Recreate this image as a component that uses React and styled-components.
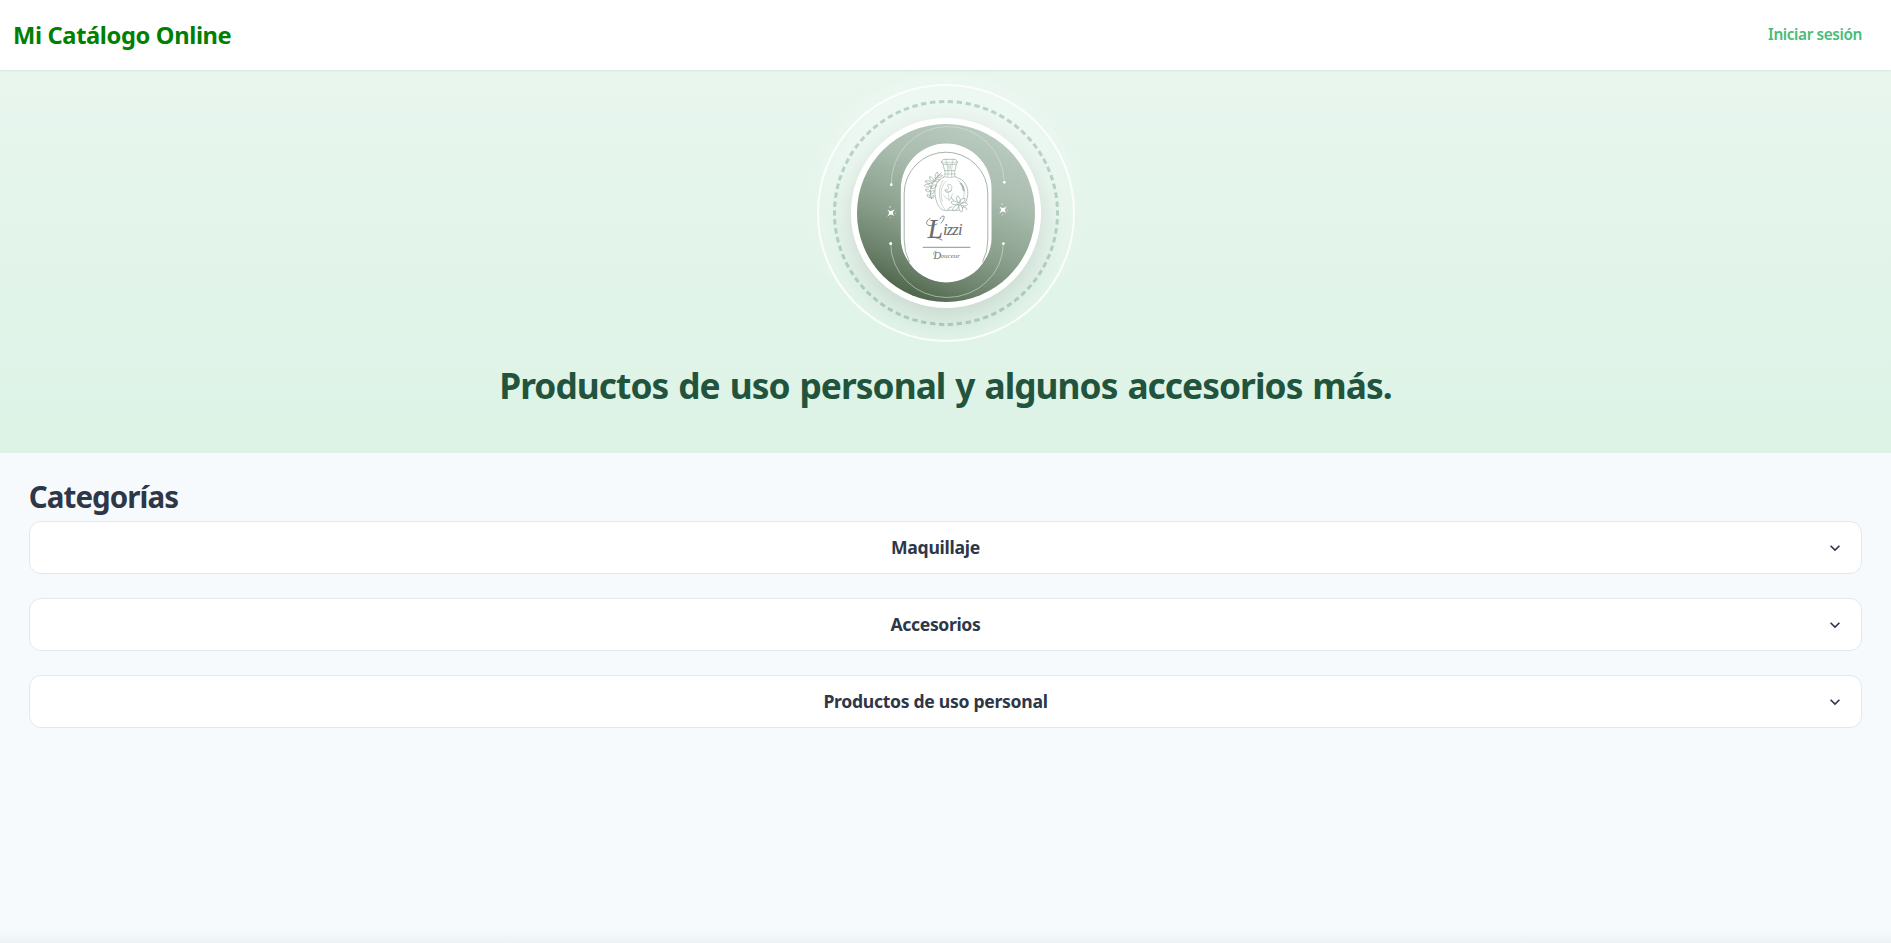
import React from "react";
import styled, { createGlobalStyle } from "styled-components";

const GlobalStyle = createGlobalStyle`
  *, *::before, *::after { box-sizing: border-box; }
  html, body { margin: 0; padding: 0; }
  body {
    background: #f6fafd;
    color: #2d3748;
    font-family: "Noto Sans", "Open Sans", sans-serif;
    overflow: hidden;
  }
  h1, h2, p { margin: 0; }
`;

const Page = styled.div`
  display: flex;
  flex-direction: column;
  height: 943px;
`;

const Navbar = styled.header`
  display: flex;
  align-items: center;
  justify-content: space-between;
  flex: none;
  height: 70px;
  padding: 0 29px 0 13px;
  background: #fff;
  box-shadow: 0 1px 2px rgba(0, 0, 0, 0.07);
  position: relative;
  z-index: 1;
`;

const Brand = styled.p`
  color: #008000;
  font-size: 23.7px;
  line-height: 36px;
  font-weight: 700;
  letter-spacing: -0.37px;
`;

const LoginLink = styled.a`
  color: #48bb78;
  font-size: 15.4px;
  line-height: 24px;
  font-weight: 600;
  letter-spacing: -0.4px;
  text-decoration: none;
`;

const Hero = styled.section`
  display: flex;
  flex-direction: column;
  align-items: center;
  flex: none;
  height: 383px;
  padding-top: 14px;
  background: linear-gradient(180deg, #e8f6ee 0%, #ddf3e6 100%);
`;

const OuterRing = styled.div`
  display: grid;
  place-items: center;
  width: 258px;
  height: 258px;
  border: 2px solid rgba(255, 255, 255, 0.85);
  border-radius: 50%;
  position: relative;

  &::before {
    content: "";
    position: absolute;
    inset: -22px;
    border-radius: 50%;
    background: radial-gradient(closest-side, rgba(255, 255, 255, 0.5) 0%, rgba(255, 255, 255, 0.34) 78%, rgba(255, 255, 255, 0) 100%);
    mask-image: linear-gradient(180deg, #000 0%, rgba(0, 0, 0, 0.15) 75%);
  }
`;

const DashedRing = styled.div`
  display: grid;
  place-items: center;
  width: 226px;
  height: 226px;
  border-radius: 50%;
  position: relative;
`;

const DashedCircle = styled.svg`
  position: absolute;
  inset: 0;
`;

const Badge = styled.div`
  width: 190px;
  height: 190px;
  border: 6px solid #fff;
  border-radius: 50%;
  overflow: hidden;
  box-shadow: 0 10px 30px rgba(0, 0, 0, 0.12);
  position: relative;

  svg { display: block; }
`;

const HeroTitle = styled.h1`
  margin-top: 19px;
  color: #22543d;
  font-size: 35.3px;
  line-height: 48px;
  font-weight: 700;
  letter-spacing: -0.95px;
  word-spacing: 1.7px;
  white-space: nowrap;
`;

const Content = styled.main`
  display: flex;
  flex-direction: column;
  flex: 1;
  padding: 24px 28.8px 0;
`;

const SectionTitle = styled.h2`
  font-size: 29.5px;
  line-height: 39px;
  height: 44px;
  font-weight: 700;
  letter-spacing: -0.93px;
`;

const CategoryList = styled.div`
  display: flex;
  flex-direction: column;
  gap: 24px;
`;

const CategoryButton = styled.button`
  display: flex;
  align-items: center;
  height: 53px;
  padding: 0 16px;
  border: 1px solid #e2e8f0;
  border-radius: 12px;
  background: #fff;
  color: #2d3748;
  font-family: inherit;
`;

const CategoryName = styled.span`
  flex: 1;
  text-align: center;
  font-size: 17.6px;
  line-height: 26px;
  font-weight: 700;
  padding-bottom: 2px;
  letter-spacing: ${(p) => p.$tracking}px;
`;

const FooterShadow = styled.footer`
  flex: none;
  height: 14px;
  background: linear-gradient(180deg, rgba(34, 104, 71, 0), rgba(34, 104, 71, 0.045));
`;

function Sparkle({ x, y }) {
  return (
    <g transform={`translate(${x} ${y})`} fill="#fff" stroke="none">
      <path d="M-3.6 -3 Q-.6 -1.5 .2 -1.7 Q1.8 -2.2 4 -3.6 Q1.8 -1 1.8 .2 Q2 1.6 3.4 3.4 Q1 1.7 -.2 1.8 Q-1.6 2 -3.8 4 Q-1.9 1.2 -1.9 0 Q-2 -1.2 -3.6 -3Z" />
      <circle cx="-1" cy="-5.8" r="0.8" opacity="0.65" />
      <circle cx="-0.5" cy="4.9" r="0.7" opacity="0.5" />
      <circle cx="4.4" cy="0.6" r="0.6" opacity="0.5" />
    </g>
  );
}

function LogoArt() {
  return (
    <svg width="178" height="178" viewBox="0 0 178 178">
      <defs>
        <linearGradient id="sage" x1="0.69" y1="0.02" x2="0.27" y2="0.98">
          <stop offset="0" stopColor="#bacbbf" />
          <stop offset="0.3" stopColor="#a9bcae" />
          <stop offset="0.6" stopColor="#8aa08c" />
          <stop offset="0.82" stopColor="#6c826b" />
          <stop offset="1" stopColor="#4b6145" />
        </linearGradient>
      </defs>
      <rect width="178" height="178" fill="url(#sage)" />
      <g fill="none" stroke="#dbe7dd" strokeWidth="0.7" opacity="0.8">
        <path d="M34.3 60.5 A56.5 57 0 0 1 147.3 58.5" />
        <path d="M33.7 119.5 A56.3 54 0 0 0 146.3 119.5" />
      </g>
      <g fill="#fff">
        <circle cx="34.3" cy="60.7" r="1.4" />
        <circle cx="147.3" cy="58.3" r="1.4" />
        <circle cx="33.7" cy="119.4" r="1.5" />
        <circle cx="146.4" cy="119.6" r="1.4" />
      </g>
      <Sparkle x={34} y={88.7} />
      <Sparkle x={146} y={85.8} />

      <rect x="43.8" y="20.4" width="90.9" height="138.2" rx="45.4" fill="#3f5a45" opacity="0.2" />
      <path
        d="M43.8 65 A45.4 45.4 0 0 1 134.6 65 V114 Q134.6 125 128.5 135 A44.8 44.8 0 0 1 49.8 135 Q43.8 125 43.8 114Z"
        fill="#fff"
      />
      <path
        d="M52.5 138 Q47.2 128 47.2 116 V69.5 A41.8 41.3 0 0 1 130.8 69.5 V116 Q130.8 128 125.5 138"
        fill="none"
        stroke="#8ba192"
        strokeWidth="0.8"
      />

      <g
        transform="translate(23 6) scale(0.3333)"
        fill="none"
        stroke="#96aa9d"
        strokeWidth="2.1"
        strokeLinecap="round"
        strokeLinejoin="round"
      >
        <path d="M191 88 H227 L233 97 L226 103 H191 L184 97Z" />
        <path d="M184 97 H233 M197 88 L201 103 M220 88 L216 103" strokeWidth="1.4" />
        <path d="M189 103 L194 122 H225 L229 103" />
        <path d="M202 105 V117 H216 V105 M206 114 V107 L211 113 V107" strokeWidth="1.4" />
        <path d="M195 122 V139 M224 122 V139 M204 122 V140 M215 122 V140 M193 132 H226 M191 140 Q209 146 228 140" strokeWidth="1.6" />
        <path d="M191 142 C166 151 160 179 168 209 Q175 235 190 241 H238 Q255 231 262 203 C269 170 252 146 228 142" />
        <path d="M188 153 C173 174 175 216 194 238 M233 150 C253 162 257 195 248 214" strokeWidth="1.4" />
        <path d="M199 153 C184 164 179 190 187 214" strokeWidth="1.4" />
        <path d="M240 159 Q249 168 250 181 M244 160 Q253 169 253 183" strokeWidth="2.8" />
        <path d="M202 166 Q214 158 216 172 Q216 185 205 188 Q193 187 196 178 Q205 182 207 174Z M196 181 Q207 190 215 181" strokeWidth="1.7" />
        <path d="M205 191 L208 212 M190 194 Q197 208 206 209 M218 191 Q214 204 209 211" strokeWidth="1.2" />
        <path d="M154 206 Q145 177 162 154 Q171 139 184 128" />
        <path d="M162 154 Q147 153 149 140 Q160 141 162 154 M158 159 Q142 165 135 153 Q145 148 158 159 M166 147 Q163 132 172 126 Q178 138 166 147" />
        <path d="M172 141 Q182 145 187 136 Q178 131 172 141 M164 153 Q175 160 179 148 Q171 144 164 153 M154 169 Q140 175 133 167 Q140 157 154 169" />
        <path d="M153 175 Q164 179 170 166 Q159 161 153 175 M151 184 Q139 190 136 178 Q145 174 151 184 M151 193 Q162 193 164 182 Q152 180 151 193 M152 202 Q141 205 141 194 Q149 191 152 202 M154 205 Q164 206 162 196 Q156 195 154 205" />
        <g fill="#fff">
          <path d="M238 222 Q224 207 233 198 Q246 206 238 222 Q241 204 255 205 Q256 218 238 222 Q258 214 263 223 Q256 234 238 222 Q254 236 245 246 Q233 240 238 222 Q231 246 218 241 Q218 228 238 222 Q215 228 213 216 Q223 208 238 222Z" />
          <path d="M233 220 L238 226 L244 219 M238 213 V224" strokeWidth="1.4" />
        </g>
        <path d="M216 230 Q205 231 203 241 M221 211 Q214 208 214 201 M251 231 Q260 231 261 239" />
      </g>

      <g fill="#6a6d6d" fontFamily='"Liberation Serif", serif' fontStyle="italic">
        <text x="70.5" y="113.5" fontSize="28">L</text>
        <text x="86" y="110.5" fontSize="16.5" textLength="19.5">izzi</text>
        <text x="76.5" y="135" fontSize="10.5">D</text>
        <text x="83.5" y="133.5" fontSize="7" textLength="19.5">ouceur</text>
      </g>
      <g fill="none" stroke="#6a6d6d" strokeWidth="0.8" strokeLinecap="round">
        <path d="M80 100 C70 105 66 98 73 94.5 M83 95 C87 88 89.5 94 84 99 M71.5 113.5 Q77 112 85 116" />
        <path d="M66.2 123.3 H113" strokeWidth="0.75" />
        <path d="M77 131 Q75 128 79 127" strokeWidth="0.5" />
      </g>
    </svg>
  );
}

function ChevronDown() {
  return (
    <svg width="20" height="20" viewBox="0 0 24 24" fill="currentColor">
      <path d="M16.59 8.59L12 13.17 7.41 8.59 6 10l6 6 6-6z" />
    </svg>
  );
}

const categories = [
  { name: "Maquillaje", tracking: -0.25 },
  { name: "Accesorios", tracking: -0.38 },
  { name: "Productos de uso personal", tracking: -0.3 },
];

export default function App() {
  return (
    <Page>
      <GlobalStyle />
      <Navbar>
        <Brand>Mi Catálogo Online</Brand>
        <LoginLink>Iniciar sesión</LoginLink>
      </Navbar>
      <Hero>
        <OuterRing>
          <DashedRing>
            <DashedCircle width="226" height="226" viewBox="0 0 226 226">
              <circle
                cx="113"
                cy="113"
                r="111.5"
                fill="none"
                stroke="#22674e"
                strokeOpacity="0.25"
                strokeWidth="3"
                pathLength="780"
                strokeDasharray="6 4"
                strokeDashoffset="3"
              />
            </DashedCircle>
            <Badge>
              <LogoArt />
            </Badge>
          </DashedRing>
        </OuterRing>
        <HeroTitle>Productos de uso personal y algunos accesorios más.</HeroTitle>
      </Hero>
      <Content>
        <SectionTitle>Categorías</SectionTitle>
        <CategoryList>
          {categories.map((c) => (
            <CategoryButton key={c.name} type="button">
              <CategoryName $tracking={c.tracking}>{c.name}</CategoryName>
              <ChevronDown />
            </CategoryButton>
          ))}
        </CategoryList>
      </Content>
      <FooterShadow />
    </Page>
  );
}
